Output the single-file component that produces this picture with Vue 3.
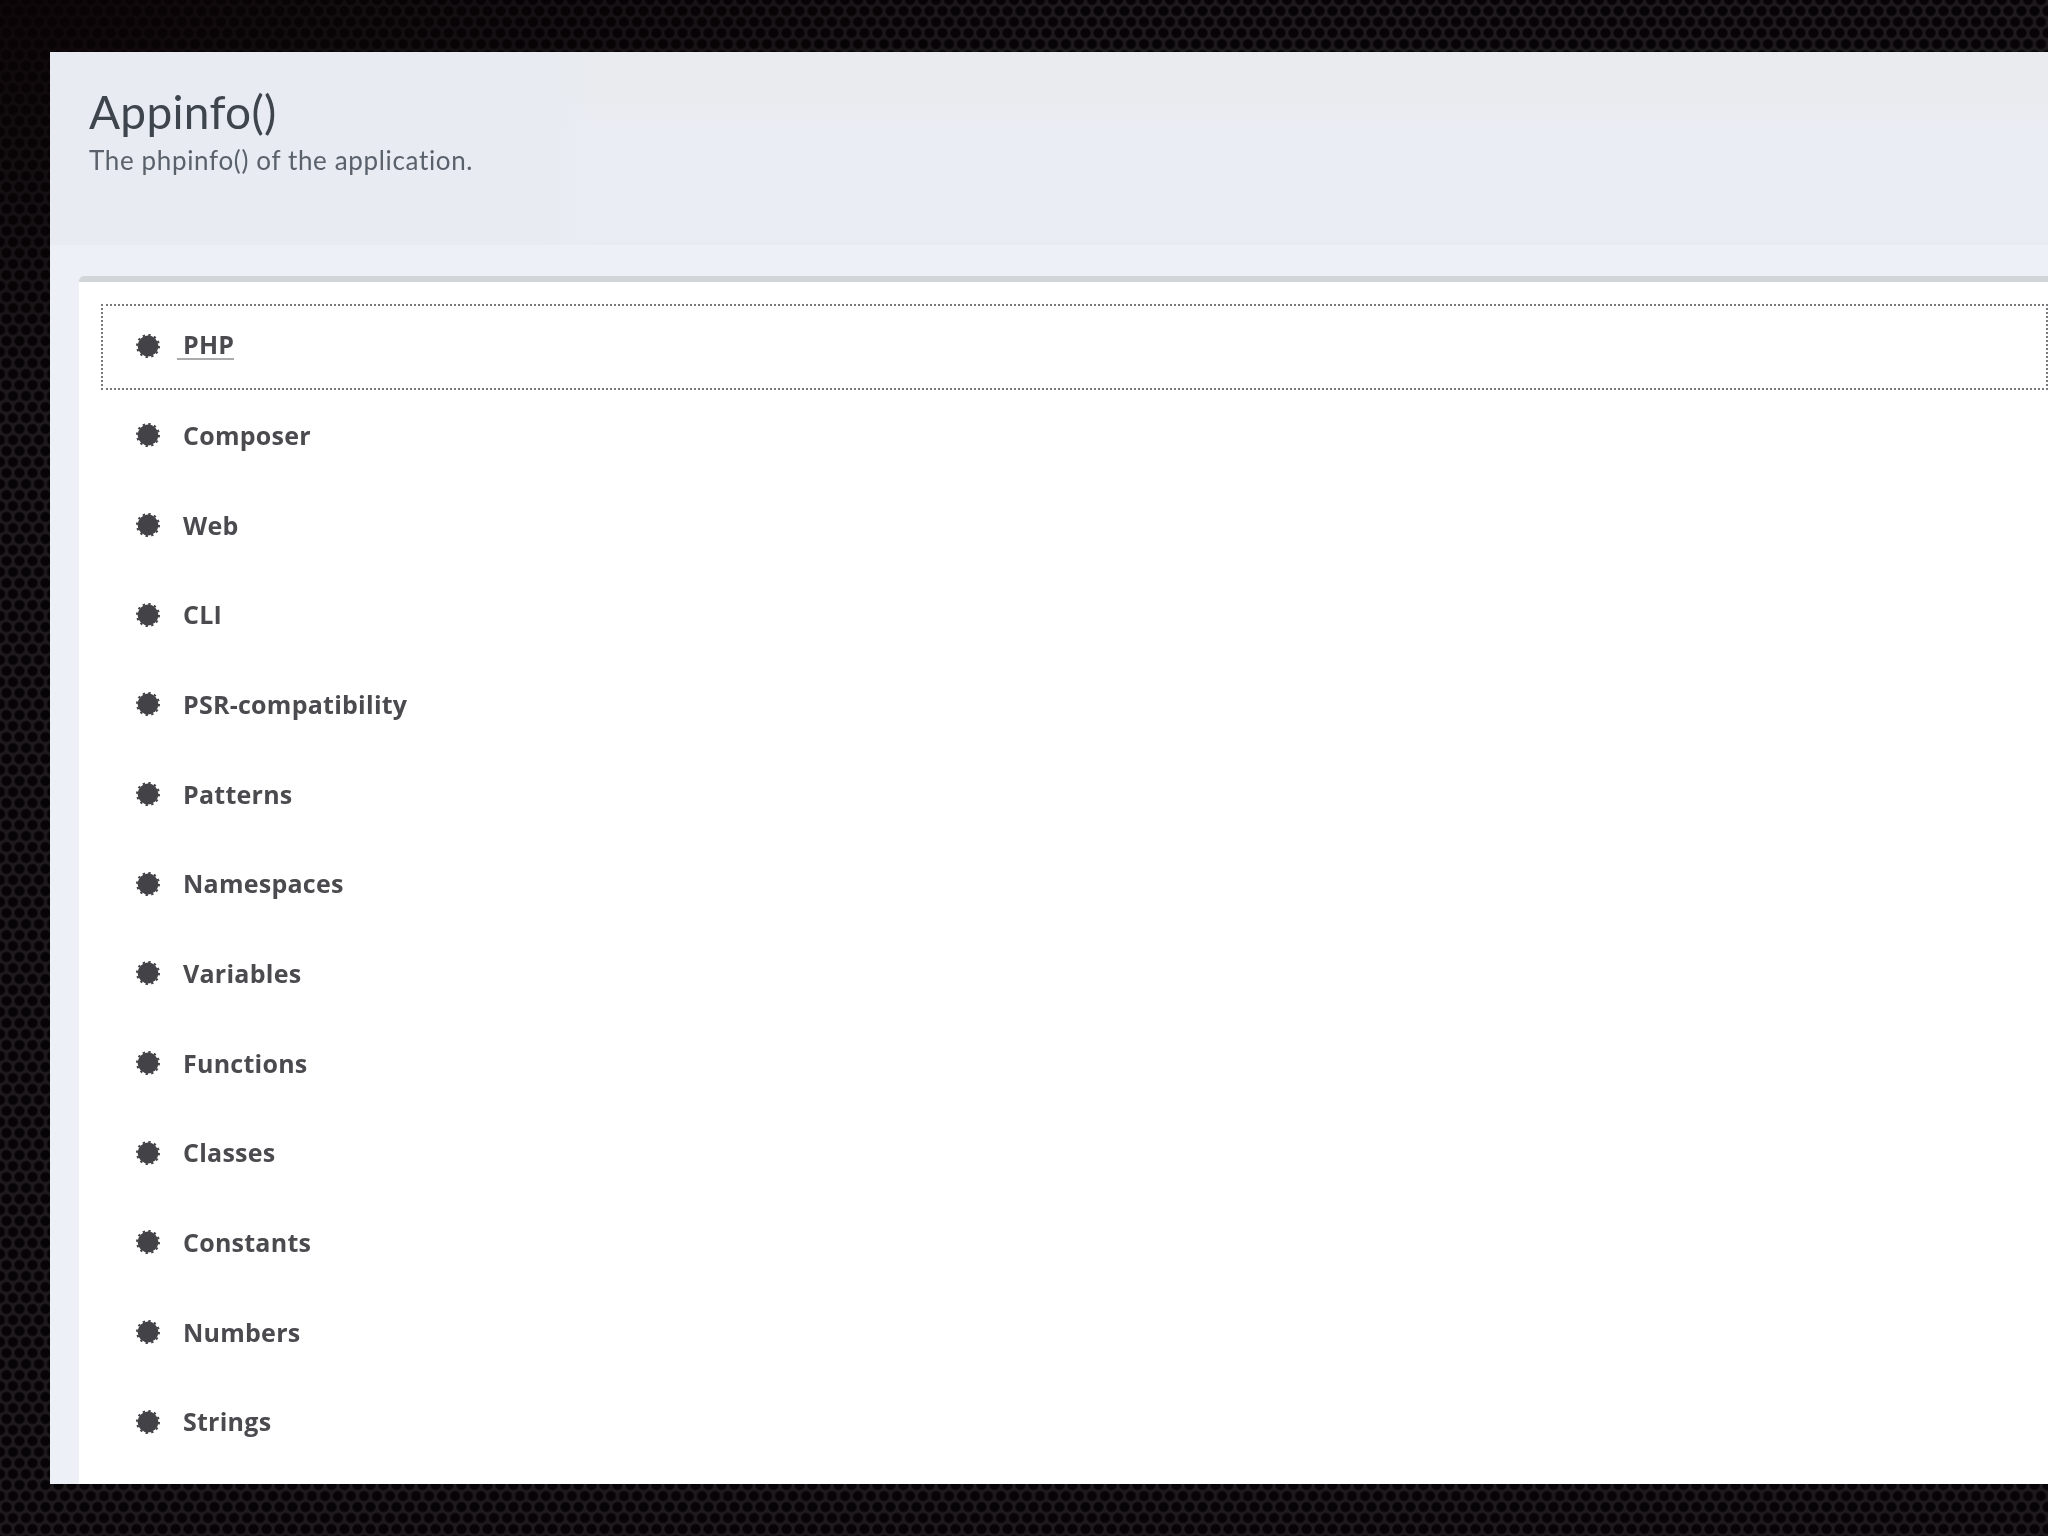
<script setup>
const items = ['PHP','Composer','Web','CLI','PSR-compatibility','Patterns','Namespaces','Variables','Functions','Classes','Constants','Numbers','Strings']
</script>

<template>
  <div class="desktop">
    <main class="panel">
      <header class="head">
        <h1 class="title">Appinfo()</h1>
        <p class="sub">The phpinfo() of the application.</p>
      </header>
      <section class="content">
        <div class="box">
          <ul class="list">
            <li v-for="(item, i) in items" :key="item" class="row" :class="{ focus: i === 0 }">
              <svg class="cert" width="26" height="26" viewBox="0 0 26 26" aria-hidden="true">
                <circle cx="13" cy="13" r="10.4" class="core" />
                <circle cx="13" cy="13" r="11" class="teeth" />
              </svg>
              <a class="link">{{ item }}</a>
            </li>
          </ul>
        </div>
      </section>
    </main>
  </div>
</template>

<style>
html, body { margin: 0; background: #0b0709; overflow: hidden; }
</style>

<style scoped>
.desktop {
  box-sizing: border-box;
  width: 2048px;
  height: 1536px;
  padding: 52px 0 52px 50px;
  display: flex;
  background-color: #1e1a1e;
  background-image:
    radial-gradient(ellipse 1100px 420px at 0 0, rgba(10,3,5,.82), rgba(10,3,5,0) 100%),
    radial-gradient(circle at 50% 50%, #060406 0, #060406 4px, transparent 6px),
    radial-gradient(circle at 50% 50%, #060406 0, #060406 4px, transparent 6px);
  background-size: auto, 13px 22px, 13px 22px;
  background-position: 0 0, 0 0, 6.5px 11px;
}
.panel {
  flex: 1;
  min-width: 0;
  display: flex;
  flex-direction: column;
  background: #edf0f7;
  overflow: hidden;
  font-family: "Lato", "Open Sans", sans-serif;
  font-variant-ligatures: none;
}
.head {
  height: 193px;
  box-sizing: border-box;
  padding: 35px 0 0 39px;
  background:
    linear-gradient(90deg, #e8ecf2 0, #e8ecf2 500px, rgba(232,236,242,0) 560px),
    linear-gradient(180deg, #e9ebee 0, #e9ebee 40px, #ebedf5 85px, #ebedf5 186px, #e8ebf1 100%);
}
.title {
  margin: 0;
  font-size: 46px;
  line-height: 50px;
  font-weight: 400;
  letter-spacing: 0.3px;
  color: #3f454d;
  filter: blur(0.4px);
}
.sub {
  margin: 7px 0 0;
  font-size: 26px;
  line-height: 32px;
  letter-spacing: 0.65px;
  color: #5a616b;
  filter: blur(0.4px);
}
.content {
  flex: 1;
  min-height: 0;
  padding: 31px 0 0 29px;
}
.box {
  height: 100%;
  box-sizing: border-box;
  border-top: 6px solid #d2d6d9;
  border-top-left-radius: 5px;
  background: #fff;
  padding: 22px 0 0 22px;
}
.list {
  margin: 0;
  padding: 0;
  list-style: none;
}
.row {
  height: 89.67px;
  box-sizing: border-box;
  display: flex;
  align-items: center;
  padding: 0 0 6px 34px;
  gap: 22px;
}
.row.focus {
  outline: 2px dotted #77797d;
  outline-offset: -2px;
  height: 86px;
  margin-bottom: 3.67px;
  padding-bottom: 3px;
}
.cert { flex: none; filter: blur(0.4px); }
.core { fill: #434347; }
.teeth {
  fill: none;
  stroke: #434347;
  stroke-width: 2;
  stroke-dasharray: 2.4 3.36;
}
.link {
  font-family: "Open Sans", "Lato", sans-serif;
  font-size: 25px;
  line-height: 30px;
  font-weight: 700;
  letter-spacing: 0.25px;
  color: #4a4a4f;
  margin-top: -1px;
  filter: blur(0.4px);
}
.focus .link {
  margin-left: -6px;
  padding-left: 6px;
  border-bottom: 2px solid #a9abad;
  line-height: 28px;
}
</style>
